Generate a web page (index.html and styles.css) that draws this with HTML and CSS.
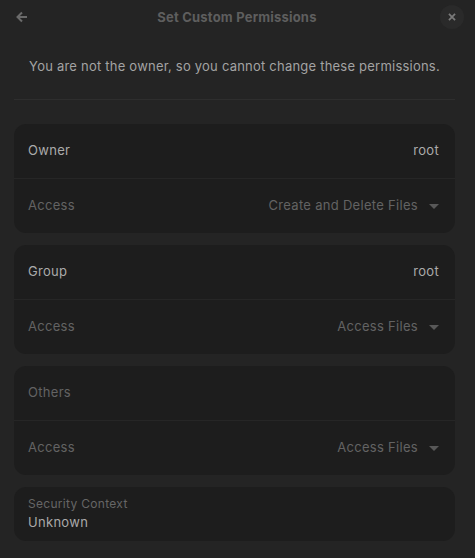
FILE: index.html
```html
<!DOCTYPE html>
<html lang="en">
<head>
    <meta charset="UTF-8">
    <meta name="viewport" content="width=device-width, initial-scale=1.0">
    <title>Set Custom Permissions</title>
    <link rel="stylesheet" href="styles.css">
</head>
<body>
    <div class="dialog">
        <div class="header-bar">
            <div class="header-button back-button">
                <svg width="16" height="16" viewBox="0 0 16 16">
                    <path d="M13 8H4M8 3.5L3.5 8 8 12.5" fill="none" stroke="currentColor" stroke-width="2"/>
                </svg>
            </div>
            <div class="header-title">Set Custom Permissions</div>
            <div class="header-button close-button">
                <svg width="16" height="16" viewBox="0 0 16 16">
                    <path d="M4.5 4.5l7 7M11.5 4.5l-7 7" fill="none" stroke="currentColor" stroke-width="2"/>
                </svg>
            </div>
        </div>

        <div class="content">
            <div class="notice">You are not the owner, so you cannot change these permissions.</div>
            <div class="separator"></div>

            <div class="card">
                <div class="row">
                    <div class="row-title">Owner</div>
                    <div class="row-value">root</div>
                </div>
                <div class="row dim">
                    <div class="row-title">Access</div>
                    <div class="row-value">Create and Delete Files<span class="arrow"></span></div>
                </div>
            </div>

            <div class="card">
                <div class="row">
                    <div class="row-title">Group</div>
                    <div class="row-value">root</div>
                </div>
                <div class="row dim">
                    <div class="row-title">Access</div>
                    <div class="row-value">Access Files<span class="arrow"></span></div>
                </div>
            </div>

            <div class="card">
                <div class="row dim">
                    <div class="row-title">Others</div>
                </div>
                <div class="row dim">
                    <div class="row-title">Access</div>
                    <div class="row-value">Access Files<span class="arrow"></span></div>
                </div>
            </div>

            <div class="card">
                <div class="property-row">
                    <div class="property-label">Security Context</div>
                    <div class="property-value">Unknown</div>
                </div>
            </div>
        </div>
    </div>
</body>
</html>
```

FILE: styles.css
```css
* {
    margin: 0;
    padding: 0;
    box-sizing: border-box;
    font-family: Inter, 'Noto Sans', sans-serif;
}

html, body {
    height: 100%;
}

body {
    background-color: #242424;
    color: #ababab;
    font-size: 13px;
}

.dialog {
    display: flex;
    flex-direction: column;
    height: 100%;
}

.header-bar {
    height: 33px;
    display: flex;
    align-items: center;
    justify-content: space-between;
    padding: 0 11px 0 10px;
}

.header-button {
    width: 24px;
    height: 24px;
    display: flex;
    justify-content: center;
    align-items: center;
    border-radius: 50%;
    color: #6a6a6a;
}

.close-button {
    background-color: #2a2a2a;
    color: #7a7a7a;
}

.close-button svg {
    width: 14px;
    height: 14px;
}

.header-title {
    font-weight: bold;
    color: #5e5e5e;
    font-size: 13px;
    letter-spacing: 0.2px;
}

.content {
    padding: 0 20px 0 14px;
    display: flex;
    flex-direction: column;
}

.notice {
    text-align: center;
    color: #a3a3a3;
    letter-spacing: 0.22px;
    padding-top: 25px;
    line-height: 16px;
}

.separator {
    height: 1px;
    background-color: #2e2e2e;
    margin: 25px 0 24px;
}

.card {
    background-color: #1d1d1d;
    border-radius: 12px;
    margin-bottom: 12px;
    overflow: hidden;
}

.row {
    height: 54px;
    display: flex;
    align-items: center;
    justify-content: space-between;
    padding: 0 16px 0 14px;
    letter-spacing: 0.3px;
}

.row + .row {
    border-top: 1px solid #262626;
    height: 55px;
}

.row-title,
.row-value {
    margin-top: -2px;
}

.row.dim {
    color: #636363;
}

.row-value {
    display: flex;
    align-items: center;
}

.arrow {
    width: 0;
    height: 0;
    border-left: 5px solid transparent;
    border-right: 5px solid transparent;
    border-top: 5px solid #585858;
    margin-left: 11px;
    margin-top: 2px;
}

.property-row {
    height: 54px;
    padding: 9px 14px 0;
    display: flex;
    flex-direction: column;
}

.property-label {
    font-size: 12px;
    color: #666;
    line-height: 16px;
    letter-spacing: 0.3px;
}

.property-value {
    color: #aaa;
    line-height: 20px;
    letter-spacing: 0.3px;
}
```
